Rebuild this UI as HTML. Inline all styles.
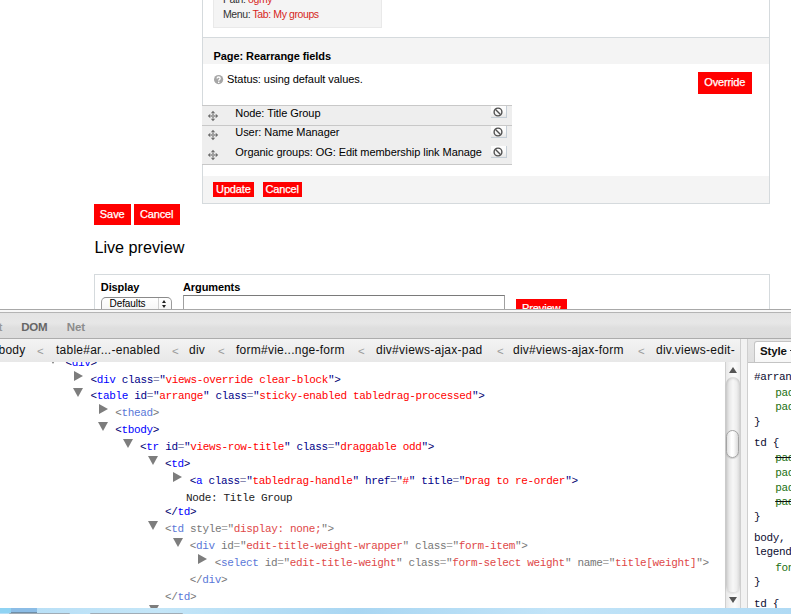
<!DOCTYPE html>
<html><head><meta charset="utf-8">
<style>
*{margin:0;padding:0;box-sizing:border-box}
html,body{width:791px;height:614px;overflow:hidden;background:#fff}
body{position:relative;font-family:"Liberation Sans",sans-serif;color:#000}
.a{position:absolute;white-space:nowrap}
.cl{position:absolute;white-space:nowrap;font-family:"Liberation Mono",monospace;color:#000088}
.cl .b{color:#000070}
.cl .t{color:#0000ff}
.cl .n{color:#000088}
.v{color:#ff0000}
.e{color:#8a8ab0}
.q{color:#000088}
.tri{position:absolute;width:0;height:0}
.dim .b{color:#777}
.dim .t{color:#5a78d8}
.dim .v{color:#e04848}
.dim .e{color:#aaa}
.dim .n{color:#777}
.dim .q{color:#777}
.g{color:#2a7a2a}
</style></head><body>
<div class="a" style="left:213px;top:-5px;width:169px;height:33px;background:#f4f4f4;border:1px solid #e9e9e9"></div>
<div class="a" style="left:223px;top:-5.89px;font:normal 10.5px/10.5px 'Liberation Sans',sans-serif;color:#333;letter-spacing:-0.4px;">Path: <span style="color:#d6261c">ogmy</span></div>
<div class="a" style="left:223px;top:8.91px;font:normal 10.5px/10.5px 'Liberation Sans',sans-serif;color:#333;letter-spacing:-0.4px;">Menu: <span style="color:#d6261c">Tab: My groups</span></div>
<div class="a" style="left:202px;top:-2px;width:1px;height:206px;background:#d5dadd"></div>
<div class="a" style="left:769px;top:-2px;width:1px;height:206px;background:#d5dadd"></div>
<div class="a" style="left:202px;top:203px;width:568px;height:1px;background:#d5dadd"></div>
<div class="a" style="left:203px;top:37px;width:566px;height:1px;background:#d5dadd"></div>
<div class="a" style="left:203px;top:38px;width:566px;height:26px;background:#f4f4f4"></div>
<div class="a" style="left:213.5px;top:50.69px;font:bold 11px/11px 'Liberation Sans',sans-serif;color:#000;letter-spacing:-0.08px;">Page: Rearrange fields</div>
<svg class="a" style="left:213.9px;top:75px" width="10" height="10" viewBox="0 0 10 10"><circle cx="4.6" cy="4.6" r="4.6" fill="#a6a6a6"/><path d="M3.1 3.6C3.1 2.5 3.8 2 4.6 2S6.2 2.5 6.2 3.4C6.2 4.4 4.7 4.5 4.7 5.8" fill="none" stroke="#fff" stroke-width="1.35"/><rect x="4" y="6.6" width="1.4" height="1.4" fill="#fff"/></svg>
<div class="a" style="left:227.1px;top:73.69px;font:normal 11px/11px 'Liberation Sans',sans-serif;color:#000;letter-spacing:-0.07px;">Status: using default values.</div>
<div class="a" style="left:698px;top:72px;width:54px;height:22px;background:#f00"></div>
<div class="a" style="left:704.3px;top:77.19px;font:normal 11px/11px 'Liberation Sans',sans-serif;color:#fff;letter-spacing:-0.15px;-webkit-text-stroke:0.25px #fff">Override</div>
<div class="a" style="left:202px;top:105px;width:310px;height:60px;background:#eee"></div>
<div class="a" style="left:202px;top:104.5px;width:310px;height:1.0px;background:#c8c8c8"></div>
<div class="a" style="left:202px;top:125px;width:310px;height:1px;background:#c8c8c8"></div>
<div class="a" style="left:202px;top:164px;width:310px;height:1px;background:#c8c8c8"></div>
<div class="a" style="left:235.3px;top:107.99px;font:normal 11px/11px 'Liberation Sans',sans-serif;color:#000;letter-spacing:-0.06px;">Node: Title Group</div>
<div class="a" style="left:235.3px;top:127.19px;font:normal 11px/11px 'Liberation Sans',sans-serif;color:#000;letter-spacing:-0.06px;">User: Name Manager</div>
<div class="a" style="left:235.3px;top:146.69px;font:normal 11px/11px 'Liberation Sans',sans-serif;color:#000;letter-spacing:-0.06px;">Organic groups: OG: Edit membership link Manage</div>
<svg class="a" style="left:207px;top:109.8px" width="12" height="12" viewBox="0 0 12 12"><path d="M6 0.8L3.8 3.3H8.2Z M6 11.2L3.8 8.7H8.2Z M0.8 6L3.3 3.8V8.2Z M11.2 6L8.7 3.8V8.2Z" fill="#6e6e6e"/><path d="M5 3.3H7V8.7H5Z M3.3 5H8.7V7H3.3Z" fill="#a0a0a0"/></svg>
<svg class="a" style="left:207px;top:128.8px" width="12" height="12" viewBox="0 0 12 12"><path d="M6 0.8L3.8 3.3H8.2Z M6 11.2L3.8 8.7H8.2Z M0.8 6L3.3 3.8V8.2Z M11.2 6L8.7 3.8V8.2Z" fill="#6e6e6e"/><path d="M5 3.3H7V8.7H5Z M3.3 5H8.7V7H3.3Z" fill="#a0a0a0"/></svg>
<svg class="a" style="left:207px;top:148.9px" width="12" height="12" viewBox="0 0 12 12"><path d="M6 0.8L3.8 3.3H8.2Z M6 11.2L3.8 8.7H8.2Z M0.8 6L3.3 3.8V8.2Z M11.2 6L8.7 3.8V8.2Z" fill="#6e6e6e"/><path d="M5 3.3H7V8.7H5Z M3.3 5H8.7V7H3.3Z" fill="#a0a0a0"/></svg>
<div class="a" style="left:491px;top:106px;width:16px;height:12px;background:linear-gradient(#fdfdfd,#fafafa 50%,#e6e6e6);border-right:1px solid #c5ced6;border-bottom:1px solid #c5ced6"></div>
<svg class="a" style="left:493.3px;top:106.5px" width="10" height="10" viewBox="0 0 10 10"><circle cx="5" cy="5" r="3.9" fill="none" stroke="#505050" stroke-width="1.4"/><path d="M2.3 2.3L7.7 7.7" stroke="#505050" stroke-width="1.4"/></svg>
<div class="a" style="left:491px;top:126px;width:16px;height:12px;background:linear-gradient(#fdfdfd,#fafafa 50%,#e6e6e6);border-right:1px solid #c5ced6;border-bottom:1px solid #c5ced6"></div>
<svg class="a" style="left:493.3px;top:126.5px" width="10" height="10" viewBox="0 0 10 10"><circle cx="5" cy="5" r="3.9" fill="none" stroke="#505050" stroke-width="1.4"/><path d="M2.3 2.3L7.7 7.7" stroke="#505050" stroke-width="1.4"/></svg>
<div class="a" style="left:491px;top:146px;width:16px;height:12px;background:linear-gradient(#fdfdfd,#fafafa 50%,#e6e6e6);border-right:1px solid #c5ced6;border-bottom:1px solid #c5ced6"></div>
<svg class="a" style="left:493.3px;top:146.5px" width="10" height="10" viewBox="0 0 10 10"><circle cx="5" cy="5" r="3.9" fill="none" stroke="#505050" stroke-width="1.4"/><path d="M2.3 2.3L7.7 7.7" stroke="#505050" stroke-width="1.4"/></svg>
<div class="a" style="left:203px;top:176px;width:566px;height:27px;background:#f4f4f4"></div>
<div class="a" style="left:213px;top:182px;width:41px;height:15px;background:#f00"></div>
<div class="a" style="left:216.1px;top:184.29px;font:normal 11px/11px 'Liberation Sans',sans-serif;color:#fff;letter-spacing:-0.15px;-webkit-text-stroke:0.25px #fff">Update</div>
<div class="a" style="left:263px;top:182px;width:39px;height:15px;background:#f00"></div>
<div class="a" style="left:265.5px;top:184.29px;font:normal 11px/11px 'Liberation Sans',sans-serif;color:#fff;letter-spacing:-0.15px;-webkit-text-stroke:0.25px #fff">Cancel</div>
<div class="a" style="left:94px;top:204px;width:37px;height:21px;background:#f00"></div>
<div class="a" style="left:99.8px;top:209.19px;font:normal 11px/11px 'Liberation Sans',sans-serif;color:#fff;letter-spacing:-0.05px;-webkit-text-stroke:0.25px #fff">Save</div>
<div class="a" style="left:134px;top:204px;width:46px;height:21px;background:#f00"></div>
<div class="a" style="left:140px;top:209.19px;font:normal 11px/11px 'Liberation Sans',sans-serif;color:#fff;letter-spacing:-0.15px;-webkit-text-stroke:0.25px #fff">Cancel</div>
<div class="a" style="left:94.4px;top:238.99px;font:normal 16.2px/16.2px 'Liberation Sans',sans-serif;color:#000;letter-spacing:0px;">Live preview</div>
<div class="a" style="left:94px;top:274px;width:676px;height:60px;border:1px solid #d5dadd"></div>
<div class="a" style="left:100.8px;top:281.59px;font:bold 11px/11px 'Liberation Sans',sans-serif;color:#000;letter-spacing:-0.1px;">Display</div>
<div class="a" style="left:183px;top:281.59px;font:bold 11px/11px 'Liberation Sans',sans-serif;color:#000;letter-spacing:-0.1px;">Arguments</div>
<div class="a" style="left:101px;top:297px;width:71px;height:21px;border:1px solid #9c9c9c;border-top-color:#8a8a8a;border-radius:5px;background:linear-gradient(#fff,#f0f0f0)"></div>
<div class="a" style="left:157.5px;top:298px;width:1.0px;height:17px;background:#d0d0d0"></div>
<div class="tri" style="left:162px;top:300.3px;border-bottom:3px solid #222;border-left:2px solid transparent;border-right:2px solid transparent"></div>
<div class="tri" style="left:162px;top:305.4px;border-top:3px solid #222;border-left:2px solid transparent;border-right:2px solid transparent"></div>
<div class="a" style="left:109.6px;top:298.53px;font:normal 10px/10px 'Liberation Sans',sans-serif;color:#000;letter-spacing:-0.1px;">Defaults</div>
<div class="a" style="left:183px;top:295px;width:322px;height:25px;border:1px solid #a0a0a0;border-top-color:#7a7a7a"></div>
<div class="a" style="left:516px;top:299px;width:51px;height:21px;background:#f00"></div>
<div class="a" style="left:522px;top:302.69px;font:normal 11px/11px 'Liberation Sans',sans-serif;color:#fff;letter-spacing:-0.1px;-webkit-text-stroke:0.25px #fff">Preview</div>
<div class="a" style="left:0px;top:309px;width:791px;height:305px;background:#fff"></div>
<div class="a" style="left:0px;top:309px;width:791px;height:1px;background:#a8a8a8"></div>
<div class="a" style="left:0px;top:310px;width:791px;height:2px;background:#f7f7f7"></div>
<div class="a" style="left:0px;top:312px;width:791px;height:1px;background:#b4b4b4"></div>
<div class="a" style="left:0px;top:313px;width:791px;height:25px;background:linear-gradient(#e4e4e4,#e7e7e7 40%,#dedede 60%,#dcdcdc)"></div>
<div class="a" style="left:0px;top:338px;width:791px;height:1px;background:#acacac"></div>
<div class="a" style="left:0px;top:339px;width:741px;height:23px;background:linear-gradient(#f3f3f3,#e8e8e8)"></div>
<div class="a" style="left:-1.6px;top:322.07px;font:bold 11.5px/11.5px 'Liberation Sans',sans-serif;color:#999;letter-spacing:0px;">t</div>
<div class="a" style="left:21.2px;top:322.07px;font:bold 11.5px/11.5px 'Liberation Sans',sans-serif;color:#666;letter-spacing:-0.2px;">DOM</div>
<div class="a" style="left:66.8px;top:322.07px;font:bold 11.5px/11.5px 'Liberation Sans',sans-serif;color:#8c8c8c;letter-spacing:-0.1px;">Net</div>
<div class="a" style="left:-1.5px;top:344.34px;font:normal 12px/12px 'Liberation Sans',sans-serif;color:#111;letter-spacing:0.25px;">body</div>
<div class="a" style="left:56px;top:344.34px;font:normal 12px/12px 'Liberation Sans',sans-serif;color:#111;letter-spacing:0.25px;">table#ar...-enabled</div>
<div class="a" style="left:189px;top:344.34px;font:normal 12px/12px 'Liberation Sans',sans-serif;color:#111;letter-spacing:0.25px;">div</div>
<div class="a" style="left:236px;top:344.34px;font:normal 12px/12px 'Liberation Sans',sans-serif;color:#111;letter-spacing:0.25px;">form#vie...nge-form</div>
<div class="a" style="left:376px;top:344.34px;font:normal 12px/12px 'Liberation Sans',sans-serif;color:#111;letter-spacing:0.25px;">div#views-ajax-pad</div>
<div class="a" style="left:513px;top:344.34px;font:normal 12px/12px 'Liberation Sans',sans-serif;color:#111;letter-spacing:0.25px;">div#views-ajax-form</div>
<div class="a" style="left:656px;top:344.34px;font:normal 12px/12px 'Liberation Sans',sans-serif;color:#111;letter-spacing:0.25px;">div.views-edit-</div>
<div class="a" style="left:37px;top:344.84px;font:normal 12px/12px 'Liberation Sans',sans-serif;color:#9a9a9a;letter-spacing:0px;font-size:11.5px">&lt;</div>
<div class="a" style="left:172px;top:344.84px;font:normal 12px/12px 'Liberation Sans',sans-serif;color:#9a9a9a;letter-spacing:0px;font-size:11.5px">&lt;</div>
<div class="a" style="left:218px;top:344.84px;font:normal 12px/12px 'Liberation Sans',sans-serif;color:#9a9a9a;letter-spacing:0px;font-size:11.5px">&lt;</div>
<div class="a" style="left:358px;top:344.84px;font:normal 12px/12px 'Liberation Sans',sans-serif;color:#9a9a9a;letter-spacing:0px;font-size:11.5px">&lt;</div>
<div class="a" style="left:497px;top:344.84px;font:normal 12px/12px 'Liberation Sans',sans-serif;color:#9a9a9a;letter-spacing:0px;font-size:11.5px">&lt;</div>
<div class="a" style="left:638px;top:344.84px;font:normal 12px/12px 'Liberation Sans',sans-serif;color:#9a9a9a;letter-spacing:0px;font-size:11.5px">&lt;</div>
<div class="a" style="left:0;top:362px;width:724px;height:246px;overflow:hidden">
<div class="cl" style="left:65.55px;top:-4.23px;font-size:11px;line-height:11px;letter-spacing:-0.35px"><span class="b">&lt;</span><span class="t">div</span><span class="b">&gt;</span></div>
<div class="tri" style="left:48.25px;top:-6.80px;border-top:9px solid #7d7d7d;border-left:5px solid transparent;border-right:5px solid transparent"></div>
<div class="cl" style="left:90.40px;top:12.77px;font-size:11px;line-height:11px;letter-spacing:-0.35px"><span class="b">&lt;</span><span class="t">div</span> <span class="n">class</span><span class="e">=</span><span class="q">"</span><span class="v">views-override clear-block</span><span class="q">"</span><span class="b">&gt;</span></div>
<div class="tri" style="left:73.90px;top:8.80px;border-left:9px solid #7d7d7d;border-top:5px solid transparent;border-bottom:5px solid transparent"></div>
<div class="cl" style="left:90.40px;top:28.77px;font-size:11px;line-height:11px;letter-spacing:-0.35px"><span class="b">&lt;</span><span class="t">table</span> <span class="n">id</span><span class="e">=</span><span class="q">"</span><span class="v">arrange</span><span class="q">"</span> <span class="n">class</span><span class="e">=</span><span class="q">"</span><span class="v">sticky-enabled tabledrag-processed</span><span class="q">"</span><span class="b">&gt;</span></div>
<div class="tri" style="left:73.10px;top:26.20px;border-top:9px solid #7d7d7d;border-left:5px solid transparent;border-right:5px solid transparent"></div>
<div class="cl" style="left:115.25px;top:45.77px;font-size:11px;line-height:11px;letter-spacing:-0.35px"><span class="dim"><span class="b">&lt;</span><span class="t">thead</span><span class="b">&gt;</span></span></div>
<div class="tri" style="left:98.75px;top:41.80px;border-left:9px solid #7d7d7d;border-top:5px solid transparent;border-bottom:5px solid transparent"></div>
<div class="cl" style="left:115.25px;top:62.77px;font-size:11px;line-height:11px;letter-spacing:-0.35px"><span class="b">&lt;</span><span class="t">tbody</span><span class="b">&gt;</span></div>
<div class="tri" style="left:97.95px;top:60.20px;border-top:9px solid #7d7d7d;border-left:5px solid transparent;border-right:5px solid transparent"></div>
<div class="cl" style="left:140.10px;top:79.77px;font-size:11px;line-height:11px;letter-spacing:-0.35px"><span class="b">&lt;</span><span class="t">tr</span> <span class="n">id</span><span class="e">=</span><span class="q">"</span><span class="v">views-row-title</span><span class="q">"</span> <span class="n">class</span><span class="e">=</span><span class="q">"</span><span class="v">draggable odd</span><span class="q">"</span><span class="b">&gt;</span></div>
<div class="tri" style="left:122.80px;top:77.20px;border-top:9px solid #7d7d7d;border-left:5px solid transparent;border-right:5px solid transparent"></div>
<div class="cl" style="left:164.95px;top:96.77px;font-size:11px;line-height:11px;letter-spacing:-0.35px"><span class="b">&lt;</span><span class="t">td</span><span class="b">&gt;</span></div>
<div class="tri" style="left:147.65px;top:94.20px;border-top:9px solid #7d7d7d;border-left:5px solid transparent;border-right:5px solid transparent"></div>
<div class="cl" style="left:189.80px;top:113.77px;font-size:11px;line-height:11px;letter-spacing:-0.35px"><span class="b">&lt;</span><span class="t">a</span> <span class="n">class</span><span class="e">=</span><span class="q">"</span><span class="v">tabledrag-handle</span><span class="q">"</span> <span class="n">href</span><span class="e">=</span><span class="q">"</span><span class="v">#</span><span class="q">"</span> <span class="n">title</span><span class="e">=</span><span class="q">"</span><span class="v">Drag to re-order</span><span class="q">"</span><span class="b">&gt;</span></div>
<div class="tri" style="left:173.30px;top:109.80px;border-left:9px solid #7d7d7d;border-top:5px solid transparent;border-bottom:5px solid transparent"></div>
<div class="cl" style="left:186.07px;top:130.77px;font-size:11px;line-height:11px;letter-spacing:-0.35px"><span style="color:#222">Node: Title Group</span></div>
<div class="cl" style="left:164.95px;top:144.77px;font-size:11px;line-height:11px;letter-spacing:-0.35px"><span class="b">&lt;/</span><span class="t">td</span><span class="b">&gt;</span></div>
<div class="cl dim" style="left:164.95px;top:161.77px;font-size:11px;line-height:11px;letter-spacing:-0.35px"><span class="b">&lt;</span><span class="t">td</span> <span class="n">style</span><span class="e">=</span><span class="q">"</span><span class="v">display: none;</span><span class="q">"</span><span class="b">&gt;</span></div>
<div class="tri" style="left:147.65px;top:159.20px;border-top:9px solid #7d7d7d;border-left:5px solid transparent;border-right:5px solid transparent"></div>
<div class="cl dim" style="left:189.80px;top:178.77px;font-size:11px;line-height:11px;letter-spacing:-0.35px"><span class="b">&lt;</span><span class="t">div</span> <span class="n">id</span><span class="e">=</span><span class="q">"</span><span class="v">edit-title-weight-wrapper</span><span class="q">"</span> <span class="n">class</span><span class="e">=</span><span class="q">"</span><span class="v">form-item</span><span class="q">"</span><span class="b">&gt;</span></div>
<div class="tri" style="left:172.50px;top:176.20px;border-top:9px solid #7d7d7d;border-left:5px solid transparent;border-right:5px solid transparent"></div>
<div class="cl dim" style="left:214.65px;top:195.77px;font-size:11px;line-height:11px;letter-spacing:-0.35px"><span class="b">&lt;</span><span class="t">select</span> <span class="n">id</span><span class="e">=</span><span class="q">"</span><span class="v">edit-title-weight</span><span class="q">"</span> <span class="n">class</span><span class="e">=</span><span class="q">"</span><span class="v">form-select weight</span><span class="q">"</span> <span class="n">name</span><span class="e">=</span><span class="q">"</span><span class="v">title[weight]</span><span class="q">"</span><span class="b">&gt;</span></div>
<div class="tri" style="left:198.15px;top:191.80px;border-left:9px solid #7d7d7d;border-top:5px solid transparent;border-bottom:5px solid transparent"></div>
<div class="cl dim" style="left:189.80px;top:212.77px;font-size:11px;line-height:11px;letter-spacing:-0.35px"><span class="b">&lt;/</span><span class="t">div</span><span class="b">&gt;</span></div>
<div class="cl dim" style="left:164.95px;top:229.77px;font-size:11px;line-height:11px;letter-spacing:-0.35px"><span class="b">&lt;/</span><span class="t">td</span><span class="b">&gt;</span></div>
<div class="tri" style="left:148.6px;top:242.5px;border-top:9px solid #7d7d7d;border-left:5px solid transparent;border-right:5px solid transparent"></div>
</div>
<div class="a" style="left:724px;top:362px;width:17px;height:246px;background:#fff"></div>
<div class="a" style="left:725px;top:362px;width:16px;height:246px;background:linear-gradient(90deg,#e8e8e8,#f6f6f6 35%,#fbfbfb 60%,#ececec);border-left:1px solid #d0d0d0"></div>
<div class="tri" style="left:729px;top:367px;border-bottom:6px solid #555;border-left:4px solid transparent;border-right:4px solid transparent"></div>
<div class="tri" style="left:729px;top:597px;border-top:6px solid #555;border-left:4px solid transparent;border-right:4px solid transparent"></div>
<div class="a" style="left:726px;top:377px;width:14px;height:215px;border-radius:7px;background:linear-gradient(90deg,#cdcdcd,#e9e9e9 25%,#f7f7f7 50%,#eeeeee 75%,#d8d8d8);box-shadow:inset 0 2px 2px rgba(0,0,0,0.10),0 2px 2px rgba(0,0,0,0.10)"></div>
<div class="a" style="left:726px;top:430px;width:13px;height:28px;border-radius:7px;border:1px solid #a4a4a4;box-shadow:0 1px 1px rgba(0,0,0,0.15);background:linear-gradient(90deg,#e0e0e0,#fff 40%,#fcfcfc 60%,#dadada)"></div>
<div class="a" style="left:740px;top:339px;width:8px;height:269px;background:#f2f2f2;border-left:1px solid #cfcfcf;border-right:1px solid #cfcfcf"></div>
<div class="a" style="left:748px;top:339px;width:43px;height:23px;background:linear-gradient(#e6e6e6,#e0e0e0)"></div>
<div class="a" style="left:748px;top:362px;width:43px;height:246px;background:#fff;border-top:1px solid #c4c4c4"></div>
<div class="a" style="left:754px;top:341px;width:50px;height:21px;background:linear-gradient(#fff,#f7f7f7);border:1px solid #c4c4c4;border-bottom:none;border-radius:3px 3px 0 0"></div>
<div class="a" style="left:760px;top:345.87px;font:bold 11.5px/11.5px 'Liberation Sans',sans-serif;color:#111;letter-spacing:-0.15px;">Style</div>
<div class="a" style="left:789.6px;top:350px;width:1.3999999999999773px;height:1px;background:#333"></div>
<div class="a" style="left:748px;top:363px;width:43px;height:245px;overflow:hidden">
<div class="a" style="left:6px;top:9.27px;font:11px/11px 'Liberation Mono',monospace;letter-spacing:-0.35px;color:#0c0c30;">#arrange</div>
<div class="a" style="left:27.200000000000045px;top:25.27px;font:11px/11px 'Liberation Mono',monospace;letter-spacing:-0.35px;color:#1c7012;">padding</div>
<div class="a" style="left:27.200000000000045px;top:39.27px;font:11px/11px 'Liberation Mono',monospace;letter-spacing:-0.35px;color:#1c7012;">padding</div>
<div class="a" style="left:6px;top:54.27px;font:11px/11px 'Liberation Mono',monospace;letter-spacing:-0.35px;color:#0c0c30;">}</div>
<div class="a" style="left:6px;top:74.77px;font:11px/11px 'Liberation Mono',monospace;letter-spacing:-0.35px;color:#0c0c30;">td {</div>
<div class="a" style="left:27.200000000000045px;top:90.27px;font:11px/11px 'Liberation Mono',monospace;letter-spacing:-0.35px;color:#1c7012;text-decoration:line-through;text-decoration-color:#111">padding</div>
<div class="a" style="left:27.200000000000045px;top:105.27px;font:11px/11px 'Liberation Mono',monospace;letter-spacing:-0.35px;color:#1c7012;">padding</div>
<div class="a" style="left:27.200000000000045px;top:119.77px;font:11px/11px 'Liberation Mono',monospace;letter-spacing:-0.35px;color:#1c7012;">padding</div>
<div class="a" style="left:27.200000000000045px;top:133.77px;font:11px/11px 'Liberation Mono',monospace;letter-spacing:-0.35px;color:#1c7012;text-decoration:line-through;text-decoration-color:#111">padding</div>
<div class="a" style="left:6px;top:148.77px;font:11px/11px 'Liberation Mono',monospace;letter-spacing:-0.35px;color:#0c0c30;">}</div>
<div class="a" style="left:6px;top:170.27px;font:11px/11px 'Liberation Mono',monospace;letter-spacing:-0.35px;color:#0c0c30;">body,</div>
<div class="a" style="left:6px;top:184.27px;font:11px/11px 'Liberation Mono',monospace;letter-spacing:-0.35px;color:#0c0c30;">legend</div>
<div class="a" style="left:27.200000000000045px;top:200.27px;font:11px/11px 'Liberation Mono',monospace;letter-spacing:-0.35px;color:#1c7012;">font</div>
<div class="a" style="left:6px;top:214.27px;font:11px/11px 'Liberation Mono',monospace;letter-spacing:-0.35px;color:#0c0c30;">}</div>
<div class="a" style="left:6px;top:236.27px;font:11px/11px 'Liberation Mono',monospace;letter-spacing:-0.35px;color:#0c0c30;">td {</div>
</div>
<div class="a" style="left:0px;top:608px;width:791px;height:6px;background:linear-gradient(90deg,#b6def6,#c4e6f8 20%,#a9d6f2 45%,#c2e4f8 70%,#b0daf4)"></div>
<div class="a" style="left:0px;top:608px;width:11px;height:5px;background:#8fd3f3"></div>
<div class="a" style="left:11px;top:608px;width:26px;height:4px;background:#8cbde6"></div>
<div class="a" style="left:11px;top:612px;width:26px;height:1px;background:#6f8fa8"></div>
<div class="a" style="left:9px;top:613px;width:61px;height:1px;background:#a0acb6;border-radius:2px 2px 0 0"></div>
<div class="a" style="left:90px;top:613px;width:93px;height:1px;background:#a0acb6;border-radius:2px 2px 0 0"></div>
</body></html>
